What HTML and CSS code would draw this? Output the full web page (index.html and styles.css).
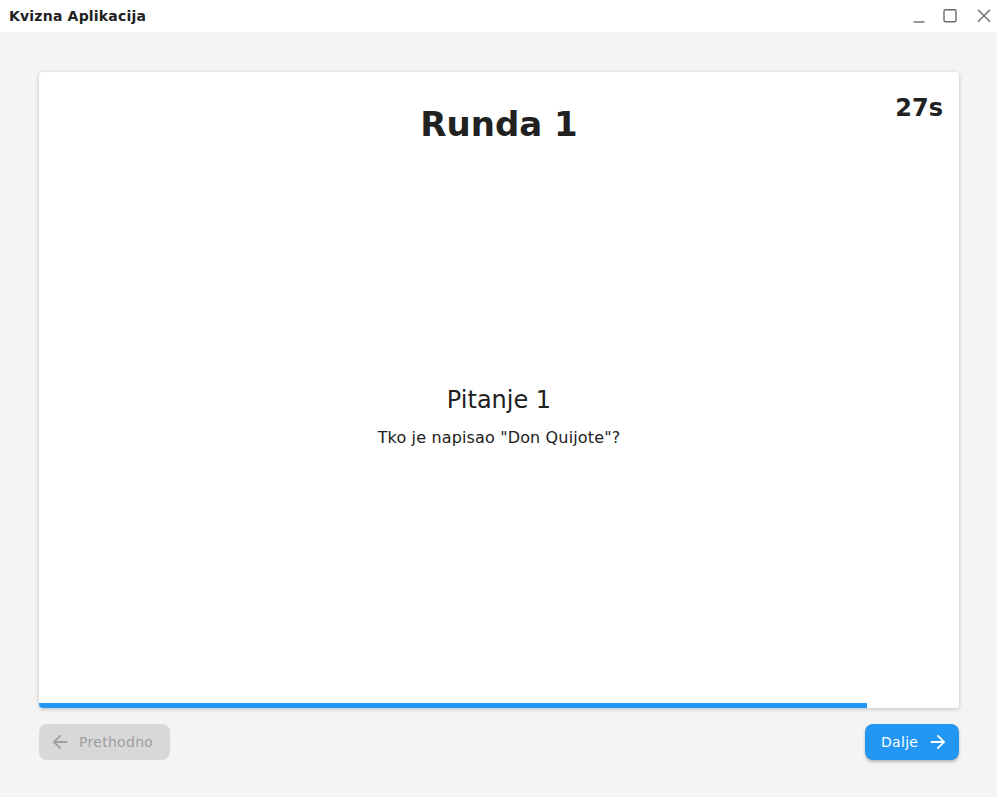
FILE: index.html
```html
<!DOCTYPE html>
<html lang="hr">
<head>
<meta charset="utf-8">
<title>Kvizna Aplikacija</title>
<link rel="stylesheet" href="styles.css">
</head>
<body>
<div class="window">
  <header class="titlebar">
    <span class="app-title">Kvizna Aplikacija</span>
    <div class="controls">
      <svg class="ctl ctl-min" width="14" height="14" viewBox="0 0 14 14"><path d="M1.5 13h11" stroke="#6a6a6a" stroke-width="1.4" fill="none"/></svg>
      <svg class="ctl ctl-max" width="14" height="14" viewBox="0 0 14 14"><rect x="1" y="0.8" width="12" height="12" rx="1.5" stroke="#6a6a6a" stroke-width="1.4" fill="none"/></svg>
      <svg class="ctl" width="14" height="14" viewBox="0 0 14 14"><path d="M1 0.8l12 12M13 0.8l-12 12" stroke="#6a6a6a" stroke-width="1.3" fill="none"/></svg>
    </div>
  </header>
  <main class="content">
    <section class="card">
      <div class="card-body">
        <div class="card-head">
          <h1 class="round">Runda 1</h1>
          <span class="timer">27s</span>
        </div>
        <div class="question">
          <h2 class="q-title">Pitanje 1</h2>
          <p class="q-text">Tko je napisao "Don Quijote"?</p>
        </div>
      </div>
      <div class="progress"><div class="progress-fill" style="width:90%"></div></div>
    </section>
    <nav class="nav">
      <button class="btn btn-prev" disabled>
        <svg width="22" height="22" viewBox="0 0 24 24"><path d="M20 11H7.83l5.59-5.59L12 4l-8 8 8 8 1.41-1.41L7.83 13H20v-2z" fill="currentColor"/></svg>
        <span>Prethodno</span>
      </button>
      <button class="btn btn-next">
        <span>Dalje</span>
        <svg width="22" height="22" viewBox="0 0 24 24"><path d="M12 4l-1.41 1.41L16.17 11H4v2h12.17l-5.58 5.59L12 20l8-8z" fill="currentColor"/></svg>
      </button>
    </nav>
  </main>
</div>
</body>
</html>
```

FILE: styles.css
```css
* { box-sizing: border-box; }
html, body { margin: 0; padding: 0; }
body {
  font-family: "DejaVu Sans", "Noto Sans", sans-serif;
  color: #212121;
  background: #f4f4f4;
}
.window {
  width: 997px;
  height: 797px;
  display: flex;
  flex-direction: column;
}
.titlebar {
  height: 32px;
  background: #ffffff;
  display: flex;
  align-items: center;
  justify-content: space-between;
  padding: 0 6px 0 9px;
}
.app-title {
  font-weight: bold;
  font-size: 14px;
  letter-spacing: 0.2px;
  color: #222;
}
.controls {
  display: flex;
  gap: 20px;
  align-items: center;
}
.ctl { display: block; }
.ctl-min { margin-right: -3px; }
.content {
  flex: 1;
  background: #f4f4f4;
  padding: 40px 38px 37px 39px;
  display: flex;
  flex-direction: column;
  gap: 16px;
}
.card {
  flex: 1;
  background: #fff;
  border-radius: 4px;
  box-shadow: 0 1px 4px rgba(0,0,0,0.22);
  display: flex;
  flex-direction: column;
  overflow: hidden;
}
.card-body {
  flex: 1;
  display: flex;
  flex-direction: column;
  padding: 32px 16px 16px 16px;
}
.card-head {
  position: relative;
  display: flex;
  justify-content: center;
}
.round {
  margin: 0;
  font-size: 34px;
  font-weight: bold;
  line-height: 40px;
  color: #212121;
}
.timer {
  position: absolute;
  right: 0;
  top: -10px;
  font-size: 24px;
  font-weight: bold;
  line-height: 28px;
  color: #212121;
}
.question {
  flex: 1;
  display: flex;
  flex-direction: column;
  align-items: center;
  justify-content: center;
  padding-top: 2px;
}
.q-title {
  margin: 0;
  font-size: 24px;
  font-weight: normal;
  line-height: 28px;
  color: #212121;
}
.q-text {
  margin: 14px 0 0 0;
  font-size: 16px;
  line-height: 20px;
  letter-spacing: 0.15px;
  color: #212121;
}
.progress {
  height: 5px;
  background: #fff;
}
.progress-fill {
  height: 100%;
  background: #2196f3;
}
.nav {
  display: flex;
  justify-content: space-between;
  height: 36px;
}
.btn {
  display: flex;
  align-items: center;
  height: 36px;
  border: none;
  border-radius: 8px;
  font-family: "DejaVu Sans", sans-serif;
  font-size: 14px;
  letter-spacing: 0.3px;
}
.btn-prev {
  background: #d8d8d8;
  color: #9e9e9e;
  width: 131px;
  padding: 0 0 0 10px;
  gap: 8px;
}
.btn-next {
  background: #2196f3;
  color: #fff;
  padding: 0 0 0 16px;
  gap: 9px;
  width: 94px;
  box-shadow: 0 2px 3px rgba(0,0,0,0.25);
}
.btn svg { display: block; flex: none; }
```
